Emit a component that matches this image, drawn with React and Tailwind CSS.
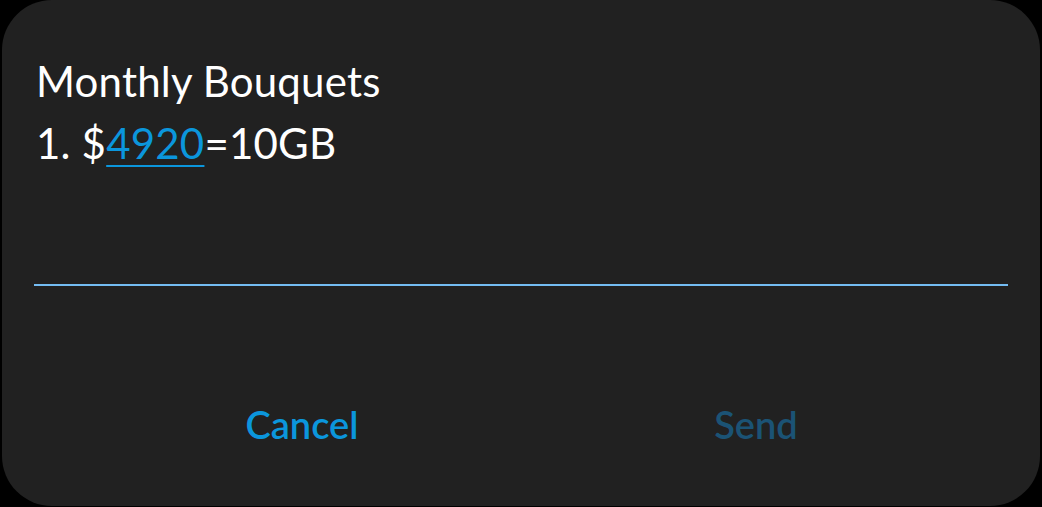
export default function App() {
  return (
    <div className="w-[1042px] h-[507px] bg-black flex pl-[2px] pr-[2px] pb-[1px]">
      <div
        className="flex-1 bg-[#212121] rounded-[50px] flex flex-col"
        style={{ fontFamily: 'Lato, "Noto Sans", sans-serif' }}
      >
        {/* Message body */}
        <div className="pt-[50px] pl-[34px] text-white text-[42px] leading-[62px] tracking-[0.2px]">
          <div>Monthly Bouquets</div>
          <div>
            1. $<span className="text-[#0b96dc] underline decoration-[2px] underline-offset-[6px]">4920</span>=10GB
          </div>
        </div>

        {/* Input underline */}
        <div className="mt-[110px] mx-[32px] h-[2px] bg-[#74bcf2]" />

        {/* Actions */}
        <div className="flex mt-[110px] text-[38px] font-semibold">
          <button className="w-[600px] text-center text-[#0b96dc]">Cancel</button>
          <button className="w-[308px] text-center text-[#1b5375]">Send</button>
        </div>
      </div>
    </div>
  );
}
